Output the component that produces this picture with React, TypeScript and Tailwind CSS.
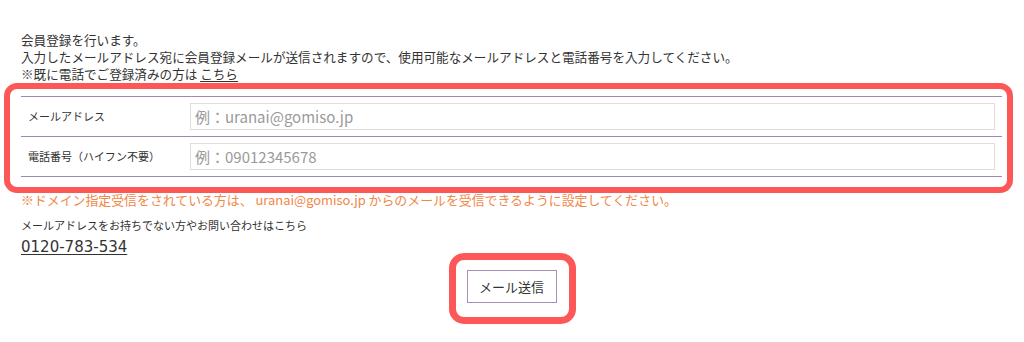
export default function App() {
  const font = { fontFamily: '"Noto Sans CJK JP", "Noto Sans", sans-serif' };
  return (
    <div className="min-h-[342px] w-[1024px] bg-white text-[#333]" style={font}>
      <div className="pl-[21px] pr-[22px] pt-[31px]">
        <div className="text-[12.6px] leading-[17px]">
          <p>会員登録を行います。</p>
          <p>入力したメールアドレス宛に会員登録メールが送信されますので、使用可能なメールアドレスと電話番号を入力してください。</p>
          <p>
            ※既に電話でご登録済みの方は <a className="underline underline-offset-2">こちら</a>
          </p>
        </div>

        <div className="relative mt-[14px]">
          <span className="pointer-events-none absolute -top-[13px] -right-[11px] -bottom-[16px] -left-[17px] rounded-[13px] border-[6px] border-[#fd5757]" />
          <table className="w-full border-collapse">
            <tbody>
              <FormRow label="メールアドレス" placeholder="例：uranai@gomiso.jp" />
              <FormRow label="電話番号（ハイフン不要）" placeholder="例：09012345678" />
            </tbody>
          </table>
        </div>

        <p className="mt-[14px] text-[12.9px] leading-[17px] text-[#f0884a]">
          ※ドメイン指定受信をされている方は、 uranai@gomiso.jp からのメールを受信できるように設定してください。
        </p>
        <p className="mt-[9px] text-[11px] leading-[16px]">メールアドレスをお持ちでない方やお問い合わせはこちら</p>
        <p className="mt-[4px] text-[15px] leading-[20px]" style={{ fontFamily: '"DejaVu Sans", sans-serif' }}>
          <a className="underline underline-offset-2">0120-783-534</a>
        </p>

        <div className="mt-[13px] flex justify-center">
          <div className="relative">
            <span className="pointer-events-none absolute -top-[17px] -right-[19px] -bottom-[21px] -left-[18px] rounded-[15px] border-[7px] border-[#fd5757]" />
            <button className="h-[33px] w-[90px] border border-[#a68fb8] bg-white text-[13px] text-[#333]">メール送信</button>
          </div>
        </div>
      </div>
    </div>
  );
}

function FormRow({ label, placeholder }: { label: string; placeholder: string }) {
  return (
    <tr className="border-y border-[#a08ab3]">
      <td className="h-[40px] w-[169px] pl-[7px] text-[11px]">{label}</td>
      <td className="pr-[7px]">
        <input
          placeholder={placeholder}
          className="block h-[27px] w-full border border-[#ddd] px-[4px] text-[15px] placeholder-[#9a9a9a] outline-none"
        />
      </td>
    </tr>
  );
}
